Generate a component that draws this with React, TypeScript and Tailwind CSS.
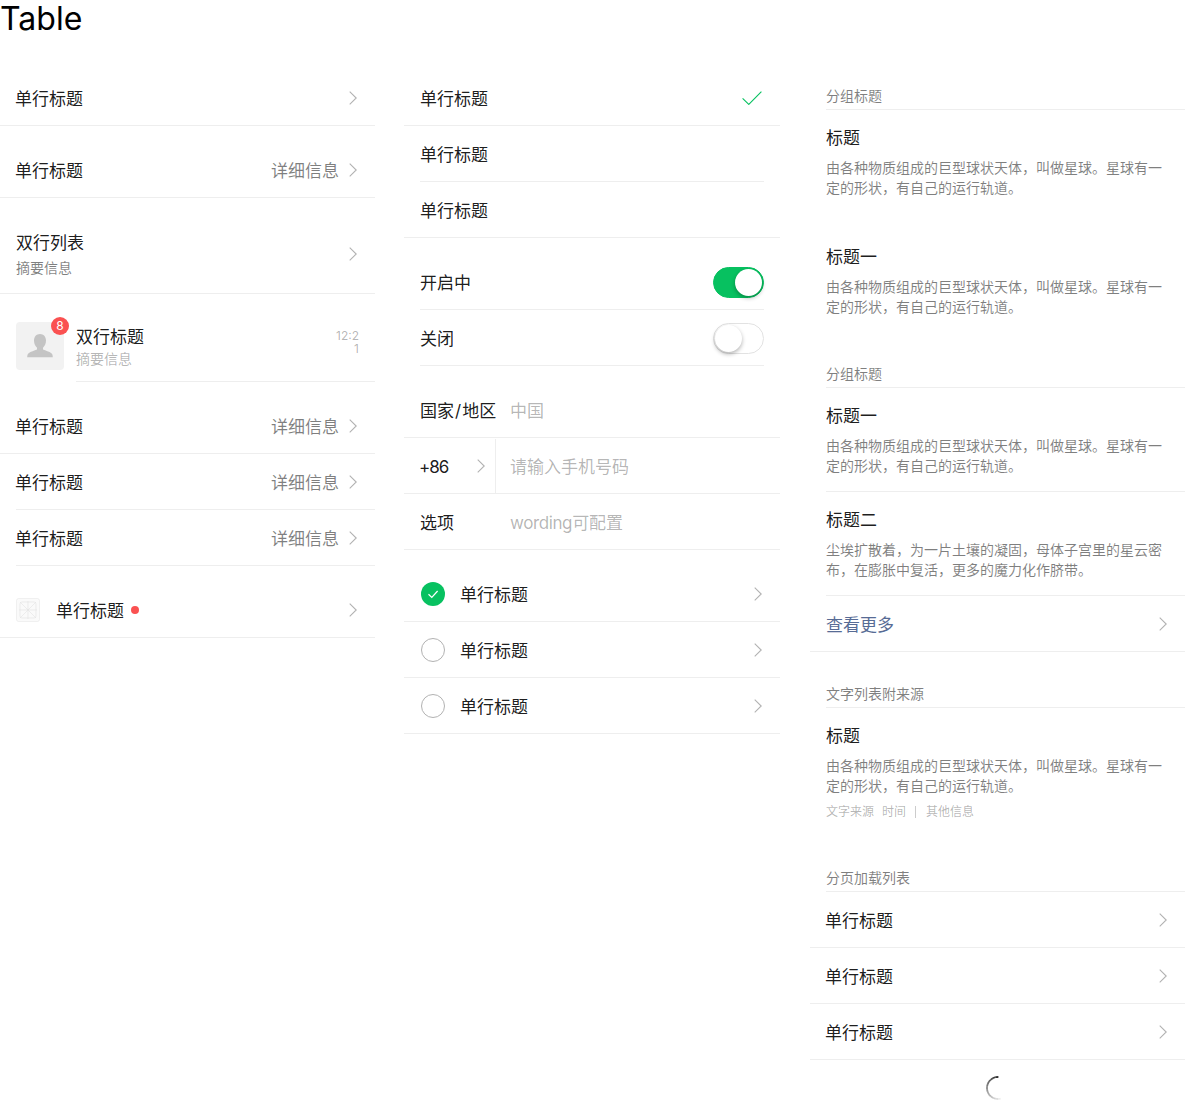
import type { ReactNode } from "react";

type Line = "full" | "left" | "both";

const LINE_CLASS: Record<Line, string> = {
  full: "pl-4 pr-[18px]",
  left: "ml-4 pr-[18px]",
  both: "mx-4",
};

const DESC = "由各种物质组成的巨型球状天体，叫做星球。星球有一定的形状，有自己的运行轨道。";

function Chevron() {
  return (
    <svg className="h-[14px] w-[8px] shrink-0" viewBox="0 0 8 14" fill="none" stroke="#b2b2b2" strokeWidth="1.1">
      <path d="M0.7 0.6 7.2 7 0.7 13.4" />
    </svg>
  );
}

function Row({ line = "full", className = "h-14", children }: { line?: Line; className?: string; children: ReactNode }) {
  return (
    <div className={`flex items-center border-b border-[#eeeeee] pt-px text-[17px] leading-6 text-black/90 [&>span]:pt-[2px] ${className} ${LINE_CLASS[line]}`}>
      {children}
    </div>
  );
}

function DetailRow({ line = "full" }: { line?: Line }) {
  return (
    <Row line={line}>
      <span className="-ml-px flex-1">单行标题</span>
      <span className="mr-[10px] text-black/50">详细信息</span>
      <Chevron />
    </Row>
  );
}

function Switch({ on }: { on?: boolean }) {
  return (
    <div
      className={`flex h-[31px] w-[51px] items-center rounded-full border p-px ${
        on ? "justify-end border-[#07c160] bg-[#07c160]" : "border-[#e2e2e2] bg-white"
      }`}
    >
      <div className="h-[27px] w-[27px] rounded-full bg-white shadow-[0_2px_4px_rgba(0,0,0,0.3)]" />
    </div>
  );
}

function RadioRow({ checked }: { checked?: boolean }) {
  return (
    <Row>
      {checked ? (
        <div className="ml-px flex h-6 w-6 items-center justify-center rounded-full bg-[#07c160]">
          <svg className="h-3 w-3" viewBox="0 0 12 12" fill="none" stroke="#fff" strokeWidth="1.2">
            <path d="M1.5 6.2 4.8 9.4 10.6 3" />
          </svg>
        </div>
      ) : (
        <div className="ml-px h-6 w-6 rounded-full border border-[#b2b2b2]" />
      )}
      <span className="ml-[15px] flex-1">单行标题</span>
      <Chevron />
    </Row>
  );
}

function GroupHeader({ title }: { title: string }) {
  return (
    <div className="ml-4 border-b border-[#eeeeee] pt-4 pb-[3px] text-sm leading-5 text-black/50">{title}</div>
  );
}

function TextItem({ title, text, className = "" }: { title: string; text: string; className?: string }) {
  return (
    <div className={`pt-4 ${className}`}>
      <div className="text-[17px] leading-6 text-black/90">{title}</div>
      <p className="mt-2 w-[340px] text-sm leading-5 text-black/50">{text}</p>
    </div>
  );
}

function Spinner() {
  // fading arc, dark at the top, going round the left side
  const segs = Array.from({ length: 14 }, (_, i) => {
    const a0 = ((-88 - i * 14) * Math.PI) / 180;
    const a1 = ((-88 - (i + 1) * 14) * Math.PI) / 180;
    const p = (a: number) => `${12 + 11 * Math.cos(a)} ${12 + 11 * Math.sin(a)}`;
    return <path key={i} d={`M${p(a0)} A11 11 0 0 0 ${p(a1)}`} strokeOpacity={0.8 - i * 0.056} />;
  });
  return (
    <svg className="h-6 w-6" viewBox="0 0 24 24" fill="none" stroke="#000" strokeWidth="1.8">
      {segs}
    </svg>
  );
}

function PlainRow() {
  return (
    <Row>
      <span className="-ml-px flex-1">单行标题</span>
      <Chevron />
    </Row>
  );
}

export default function App() {
  return (
    <div className="h-[1116px] bg-white font-[Inter,'Noto_Sans_CJK_SC',sans-serif]">
      <h1 className="h-[70px] text-[32px] leading-[38px] text-black">Table</h1>
      <div className="flex">
        {/* left column */}
        <div className="w-[375px]">
          <PlainRow />
          <div className="mt-4">
            <DetailRow />
          </div>
          <div className="mt-4">
            <Row className="h-20">
              <div className="flex-1">
                <div className="leading-6">双行列表</div>
                <div className="mt-[3px] text-sm leading-5 text-black/50">摘要信息</div>
              </div>
              <Chevron />
            </Row>
          </div>
          <div className="mt-4 flex h-[72px] items-center pl-4">
            <div className="relative h-12 w-12 rounded-[4px] bg-[#f2f2f2]">
              <svg className="absolute left-[11px] top-[12px] h-6 w-[26px]" viewBox="0 0 26 24" fill="#c4c4c4">
                <path d="M13 0c3.6 0 6 2.8 6 6.6 0 3-1.3 5.6-3 7.2v1.8c2.6 1.2 6.2 2.2 8.4 3.6 1 .7 1.4 2.2 1.4 4H.2c0-1.8.4-3.300 1.400-4 2.200-1.400 5.800-2.400 8.400-3.600v-1.800c-1.700-1.600-3-4.200-3-7.200C7 2.800 9.400 0 13 0z" />
              </svg>
              <span className="absolute -right-[5px] -top-[5px] flex h-[18px] w-[18px] items-center justify-center rounded-full bg-[#fa5151] text-xs text-white">
                8
              </span>
            </div>
            <div className="ml-3 flex h-[72px] flex-1 items-center border-b border-[#eeeeee] pr-4">
              <div className="flex-1 pt-[3px]">
                <div className="text-[17px] leading-[22px] text-black/90">双行标题</div>
                <div className="mt-px text-sm leading-5 text-black/30">摘要信息</div>
              </div>
              <div className="mb-[8px] w-6 break-all text-right text-xs leading-[13px] text-black/30">12:21</div>
            </div>
          </div>
          <div className="mt-4">
            <DetailRow />
            <DetailRow line="left" />
            <DetailRow line="left" />
          </div>
          <div className="mt-4">
            <Row>
              <svg className="h-6 w-6 shrink-0" viewBox="0 0 24 24" fill="none" stroke="#e2e2e2" strokeWidth="0.6">
                <rect x="0.5" y="0.5" width="23" height="23" rx="2" fill="#fafafa" stroke="#e8e8e8" />
                <rect x="4" y="4" width="16" height="16" rx="2" />
                <path d="M4 4l16 16M20 4 4 20M12 3v18M3 12h18" />
              </svg>
              <span className="ml-4">单行标题</span>
              <div className="ml-[7px] h-2 w-2 rounded-full bg-[#fa5151]" />
              <div className="flex-1" />
              <Chevron />
            </Row>
          </div>
        </div>

        {/* middle column */}
        <div className="ml-[29px] w-[376px]">
          <Row>
            <span className="flex-1">单行标题</span>
            <svg className="h-[14px] w-5" viewBox="0 0 20 14" fill="none" stroke="#07c160" strokeWidth="1.1">
              <path d="M0.6 7.400 6.800 13.400 19.400 0.600" />
            </svg>
          </Row>
          <Row line="both">
            <span>单行标题</span>
          </Row>
          <Row>
            <span>单行标题</span>
          </Row>
          <div className="mt-4">
            <Row line="both">
              <span className="flex-1">开启中</span>
              <Switch on />
            </Row>
            <Row line="both">
              <span className="flex-1">关闭</span>
              <Switch />
            </Row>
          </div>
          <div className="mt-4">
            <Row>
              <span className="w-[90px]">
                国家<span className="mx-px">/</span>地区
              </span>
              <span className="text-black/30">中国</span>
            </Row>
            <div className="flex h-14 items-stretch border-b border-[#eeeeee] pt-px pl-4 text-[17px] leading-6">
              <div className="flex w-[76px] items-center justify-between border-r border-[#eeeeee] pr-[10px] text-black/90">
                <span className="-ml-px pt-[2px] tracking-[-1px]">+86</span>
                <Chevron />
              </div>
              <span className="ml-[14px] self-center pt-[2px] text-black/30">请输入手机号码</span>
            </div>
            <Row>
              <span className="w-[90px]">选项</span>
              <span className="text-black/30">
                <span className="tracking-[-0.4px]">wording</span>可配置
              </span>
            </Row>
          </div>
          <div className="mt-4">
            <RadioRow checked />
            <RadioRow />
            <RadioRow />
          </div>
        </div>

        {/* right column */}
        <div className="ml-[30px] w-[375px]">
          <GroupHeader title="分组标题" />
          <div className="ml-4">
            <TextItem title="标题" text={DESC} />
            <TextItem title="标题一" text={DESC} className="mt-[31px]" />
          </div>
          <div className="mt-[31px]">
            <GroupHeader title="分组标题" />
          </div>
          <div className="ml-4">
            <div className="border-b border-[#eeeeee] pb-[15px]">
              <TextItem title="标题一" text={DESC} />
            </div>
            <div className="border-b border-[#eeeeee] pb-[15px]">
              <TextItem title="标题二" text="尘埃扩散着，为一片土壤的凝固，母体子宫里的星云密布，在膨胀中复活，更多的魔力化作脐带。" />
            </div>
          </div>
          <Row>
            <span className="flex-1 text-[#576b95]">查看更多</span>
            <Chevron />
          </Row>
          <div className="mt-4">
            <GroupHeader title="文字列表附来源" />
          </div>
          <div className="ml-4">
            <TextItem title="标题" text={DESC} />
            <div className="mt-2 flex items-center text-xs leading-4 text-black/30">
              <span>文字来源</span>
              <span className="ml-2">时间</span>
              <span className="ml-[9px] h-3 w-px bg-black/20" />
              <span className="ml-[10px]">其他信息</span>
            </div>
          </div>
          <div className="mt-8">
            <GroupHeader title="分页加载列表" />
          </div>
          <PlainRow />
          <PlainRow />
          <PlainRow />
          <div className="flex justify-center pt-4">
            <Spinner />
          </div>
        </div>
      </div>
    </div>
  );
}
